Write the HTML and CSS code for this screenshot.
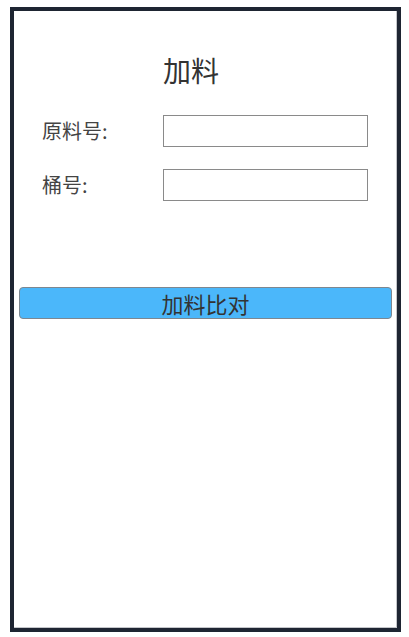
FILE: index.html
```html
<!DOCTYPE html>
<html lang="zh">
<head>
<meta charset="utf-8">
<title>加料</title>
<link rel="stylesheet" href="styles.css">
</head>
<body>
<div class="frame">
  <div class="inner">
    <div class="title">加料</div>
    <div class="form">
      <div class="row">
        <label class="label" for="mat">原料号:</label>
        <input class="field" id="mat" type="text">
      </div>
      <div class="row">
        <label class="label" for="barrel">桶号:</label>
        <input class="field" id="barrel" type="text">
      </div>
    </div>
    <button class="btn" type="button">加料比对</button>
  </div>
</div>
</body>
</html>
```

FILE: styles.css
```css
html, body {
  margin: 0;
  padding: 0;
  background: #ffffff;
}
body {
  font-family: "Noto Sans CJK SC", "Noto Sans", sans-serif;
  color: #333333;
}
.frame {
  margin: 7px 0 0 10px;
  width: 391px;
  height: 625px;
  box-sizing: border-box;
  border: 4px solid #1e2532;
}
.inner {
  height: 100%;
  box-sizing: border-box;
  border-right: 1px solid #c4c6ca;
  border-bottom: 1px solid #c4c6ca;
  padding-top: 43px;
}
.title {
  font-size: 28px;
  line-height: 32px;
  padding-left: 149px;
}
.form {
  margin-top: 29px;
  display: flex;
  flex-direction: column;
  gap: 22px;
}
.row {
  display: flex;
  align-items: center;
  padding-left: 28px;
}
.label {
  width: 121px;
  font-size: 20px;
  line-height: 24px;
  color: #444444;
}
.field {
  width: 205px;
  height: 32px;
  box-sizing: border-box;
  margin: 0;
  border: 1px solid #8a8a8a;
  background: #ffffff;
  padding: 0 4px;
  outline: none;
}
.btn {
  display: block;
  margin: 86px 4px 0 5px;
  width: calc(100% - 9px);
  height: 32px;
  box-sizing: border-box;
  background: #4bb7fa;
  border: 1px solid #7d8790;
  border-radius: 4px;
  font-family: "Noto Sans CJK SC", "Noto Sans", sans-serif;
  font-size: 22px;
  line-height: 28px;
  color: #333333;
  padding: 0;
}
```
